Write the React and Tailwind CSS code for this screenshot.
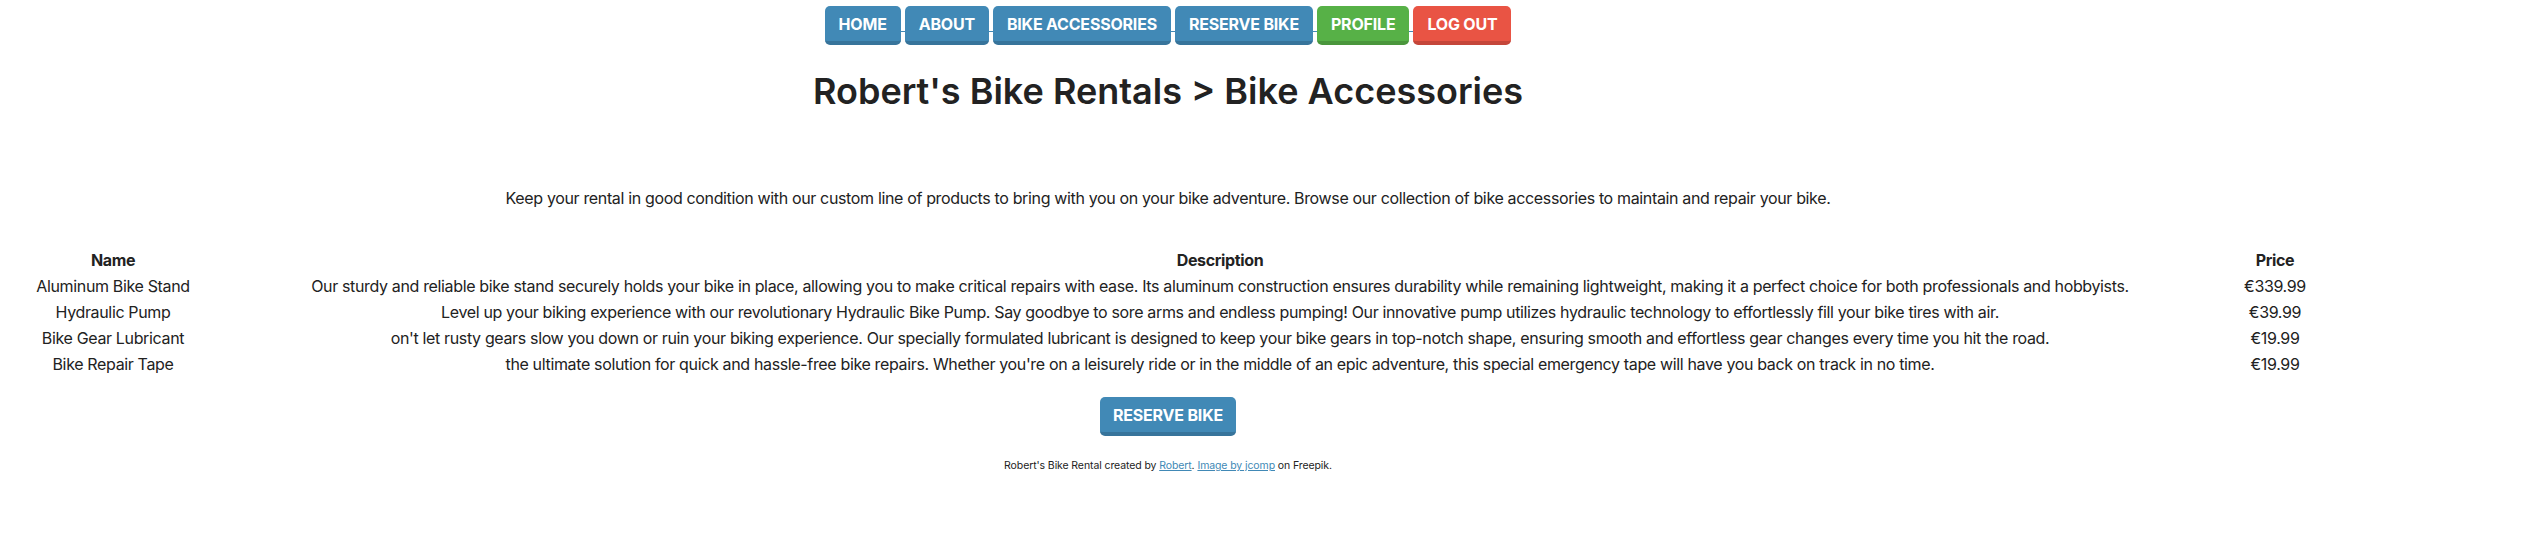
import React from 'react';

const navItems = [
  { label: 'HOME', color: 'blue' },
  { label: 'ABOUT', color: 'blue' },
  { label: 'BIKE ACCESSORIES', color: 'blue' },
  { label: 'RESERVE BIKE', color: 'blue' },
  { label: 'PROFILE', color: 'green' },
  { label: 'LOG OUT', color: 'red' },
];

const btnColors = {
  blue: 'bg-[#4189b6] border-[#37749b]',
  green: 'bg-[#57b147] border-[#4a963c]',
  red: 'bg-[#e95444] border-[#c5463a]',
};

const accessories = [
  {
    name: 'Aluminum Bike Stand',
    description:
      'Our sturdy and reliable bike stand securely holds your bike in place, allowing you to make critical repairs with ease. Its aluminum construction ensures durability while remaining lightweight, making it a perfect choice for both professionals and hobbyists.',
    price: '€339.99',
  },
  {
    name: 'Hydraulic Pump',
    description:
      'Level up your biking experience with our revolutionary Hydraulic Bike Pump. Say goodbye to sore arms and endless pumping! Our innovative pump utilizes hydraulic technology to effortlessly fill your bike tires with air.',
    price: '€39.99',
  },
  {
    name: 'Bike Gear Lubricant',
    description:
      "on't let rusty gears slow you down or ruin your biking experience. Our specially formulated lubricant is designed to keep your bike gears in top-notch shape, ensuring smooth and effortless gear changes every time you hit the road.",
    price: '€19.99',
  },
  {
    name: 'Bike Repair Tape',
    description:
      "the ultimate solution for quick and hassle-free bike repairs. Whether you're on a leisurely ride or in the middle of an epic adventure, this special emergency tape will have you back on track in no time.",
    price: '€19.99',
  },
];

const Button = ({ label, color = 'blue', pad = 'px-[14px]' }) => (
  <button
    className={`h-[39px] ${pad} rounded-[5px] border-b-[4px] text-white text-[16px] font-bold leading-none tracking-[-0.2px] ${btnColors[color]}`}
  >
    {label}
  </button>
);

const App = () => {
  return (
    <div className="w-[2336px] min-h-[546px] bg-white text-[#222] font-['Inter',sans-serif] text-center">
      {/* Nav */}
      <nav className="flex justify-center items-start pt-[6px]">
        {navItems.map((item, i) => (
          <React.Fragment key={item.label}>
            {i > 0 && <span className="w-[4px] h-px mt-[25px] bg-[#4189b6]"></span>}
            <Button label={item.label} color={item.color} />
          </React.Fragment>
        ))}
      </nav>

      {/* Title */}
      <h1 className="mt-[25px] text-[36px] leading-[42px] font-semibold">
        Robert's Bike Rentals &gt; Bike Accessories
      </h1>

      <p className="mt-[74px] text-[16px] leading-[24px] tracking-[-0.35px]">
        Keep your rental in good condition with our custom line of products to bring with you on your bike adventure. Browse our collection of bike accessories to maintain and repair your bike.
      </p>

      {/* Accessories table */}
      <table className="mt-[37px] w-full table-fixed text-[16px] leading-[24px] tracking-[-0.35px]">
        <colgroup>
          <col className="w-[226px]" />
          <col className="w-[1988px]" />
          <col className="w-[122px]" />
        </colgroup>
        <thead>
          <tr>
            <th className="py-px font-bold">Name</th>
            <th className="py-px font-bold">Description</th>
            <th className="py-px font-bold">Price</th>
          </tr>
        </thead>
        <tbody>
          {accessories.map((a) => (
            <tr key={a.name}>
              <td className="py-px">{a.name}</td>
              <td className="py-px">{a.description}</td>
              <td className="py-px">{a.price}</td>
            </tr>
          ))}
        </tbody>
      </table>

      <div className="mt-[20px] flex justify-center">
        <Button label="RESERVE BIKE" pad="px-[13px]" />
      </div>

      <p className="mt-[22px] text-[10.5px] leading-[16px] tracking-[-0.1px]">
        Robert's Bike Rental created by{' '}
        <a href="#" className="text-[#4189b6] underline">Robert</a>.{' '}
        <a href="#" className="text-[#4189b6] underline">Image by jcomp</a> on Freepik.
      </p>
    </div>
  );
};

export default App;
